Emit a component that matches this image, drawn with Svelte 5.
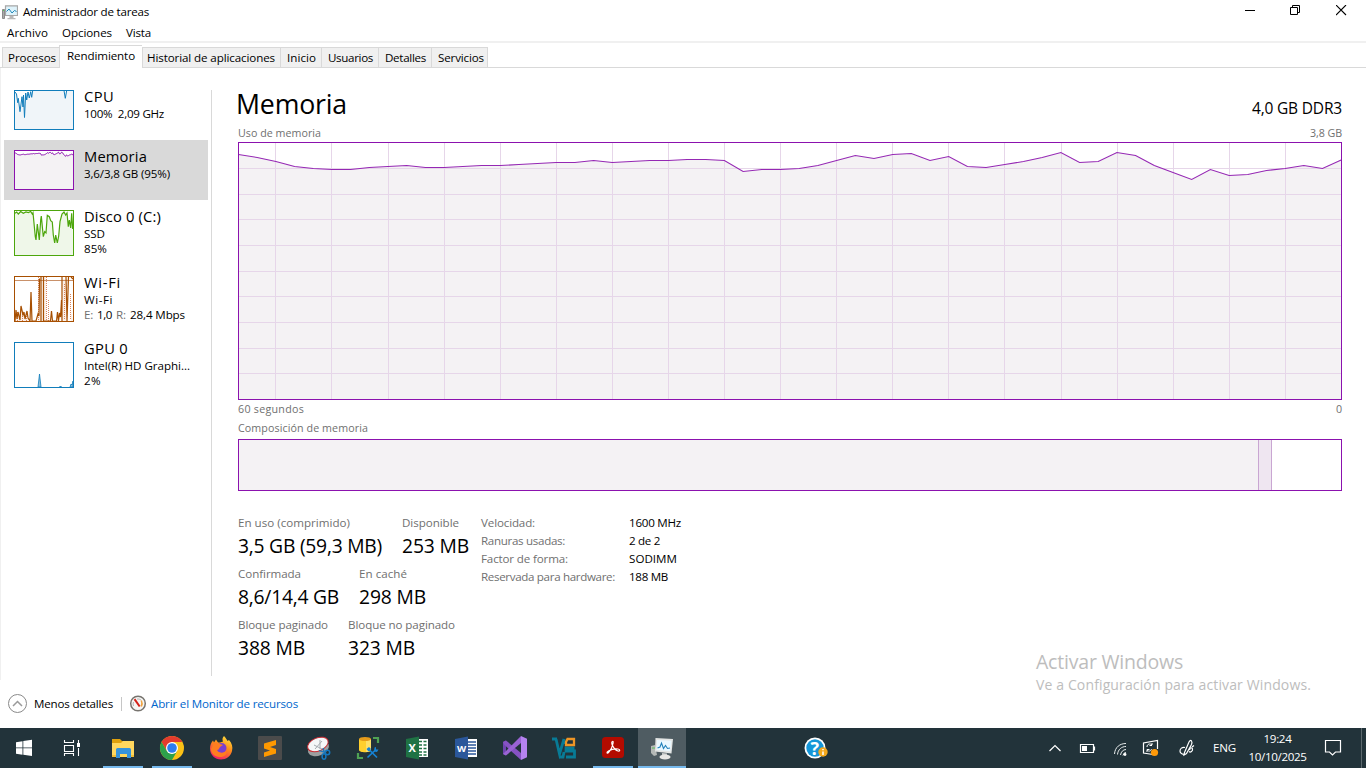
<script>
  // Spreads a label's letters so that it takes the given width.
  function fit(node, width) {
    const natural = node.getBoundingClientRect().width;
    const count = node.textContent.length;
    node.style.letterSpacing = `${(width - natural) / count}px`;
  }

  const tabs = [
    { name: 'Procesos', w: 57, t: 48 },
    { name: 'Rendimiento', w: 83, t: 68, active: true },
    { name: 'Historial de aplicaciones', w: 138, t: 128 },
    { name: 'Inicio', w: 41, t: 29 },
    { name: 'Usuarios', w: 57, t: 45 },
    { name: 'Detalles', w: 53, t: 41 },
    { name: 'Servicios', w: 57, t: 46 }
  ];

  const usage = [
    154.5, 157.5, 161.5, 166.5, 168.5, 169.5, 169.5, 167.5, 166.5, 165.5, 167.5, 167.5, 166.5, 165.5, 165.5,
    164.5, 163.5, 162.5, 162.5, 160.5, 162.5, 161.5, 160.5, 160.5, 159.5, 159.5, 160.5, 171.5, 169.5, 169.5,
    168.5, 165.5, 160.5, 155.5, 158.5, 154.5, 153.5, 160.5, 156.5, 166.5, 167.5, 164.5, 161.5, 157.5, 152.5,
    162.5, 161.5, 152.5, 155.5, 165.5, 172.5, 179.5, 169.5, 175.5, 174.5, 170.5, 168.5, 165.5, 168.5, 160
  ];
  const line = usage.map((y, i) => `${(0.5 + i * 18.69).toFixed(1)},${y - 142}`).join(' ');
  const mini = usage.map((y, i) => `${(0.5 + i).toFixed(1)},${((y - 142) * 0.155 + 0.6).toFixed(1)}`).join(' ');
  const columns = [37, 93, 150, 206, 262, 318, 374, 430, 486, 542, 598, 654, 710, 766, 823, 879, 935, 991, 1047];
  const rows = [26, 52, 77, 103, 129, 154, 180, 206, 231];

  const cpu = '1,2 2.5,4 3.7,12.7 4.3,8.3 6,21.7 8,6.7 9,17 9.5,5 10.5,27.5 11.7,3 12.7,10 14,2 15.3,8 16.7,1.7 17.7,7.3 18.7,.5 50,.5 51.3,8.3 52.7,.5 59,.5';
  const disk = '1,3.3 2.7,2 4.3,4 6.7,1.5 9.3,3.3 12,2 14.3,2.5 16.7,1.5 18.3,4 19,2.7 21.3,26.7 22,30 23.3,14 25.3,30 26.7,10 27.3,6 29.3,26.7 30.7,21.7 32,23 33.3,5.3 35.3,6.7 36.7,10.7 38.3,12 39.3,25 40.7,33 41.7,25 43.3,33 44.7,26 46,11.7 48,4 50,2 51.7,5 53,3 54.3,16.7 55.3,10 56.7,18 57.7,3.3 58.7,19';

  const stats = [
    [['En uso (comprimido)', 112, '3,5 GB (59,3 MB)', 144, 164], ['Disponible', 57, '253 MB', 67, 67]],
    [['Confirmada', 63, '8,6/14,4 GB', 101, 121], ['En caché', 48, '298 MB', 67, 67]],
    [['Bloque paginado', 90, '388 MB', 67, 110], ['Bloque no paginado', 107, '323 MB', 67, 107]]
  ];
  const details = [
    ['Velocidad:', 54, '1600 MHz', 52],
    ['Ranuras usadas:', 84, '2 de 2', 31],
    ['Factor de forma:', 87, 'SODIMM', 48],
    ['Reservada para hardware:', 134, '188 MB', 39]
  ];
</script>

<div class="window">
  <header class="titlebar">
    <svg class="appicon" width="16" height="16" viewBox="0 0 16 16">
      <path d="M.5 4.500h2v9h-2z" fill="#aaa" stroke="#8b8b8b" /><path d="M1 5h1v1H1z" fill="#5c5" />
      <path d="M3.500 .8h12v9.700h-12z" fill="#dff3fb" stroke="#a7a7a7" stroke-width="1.200" />
      <path d="M4.500 6.500 7 4l3 4 2.500-2.500 2 1" fill="none" stroke="#2188b8" />
      <path d="M7.500 11h4v2h2v1.200h-8V13h2z" fill="#b8b8b8" />
    </svg>
    <span class="t" use:fit={126}>Administrador de tareas</span>
    <div class="caption">
      <svg width="11" height="11"><path d="M0 5.500h10" stroke="#000" /></svg>
      <svg width="11" height="11"><path d="M.5 2.500h7v7h-7zM2.500 2.500v-2h7v7h-2" fill="none" stroke="#000" /></svg>
      <svg width="11" height="11"><path d="M0 0l10 10M10 0 0 10" stroke="#000" stroke-width="1.100" /></svg>
    </div>
  </header>
  <nav class="menu">
    <span class="t" use:fit={41}>Archivo</span>
    <span class="t" use:fit={50}>Opciones</span>
    <span class="t" use:fit={25}>Vista</span>
  </nav>
  <div class="tabs">
    {#each tabs as tab}
      <div class="tab" class:active={tab.active} style:width="{tab.w}px"><span class="t" use:fit={tab.t}>{tab.name}</span></div>
    {/each}
  </div>

  <div class="body">
    <aside class="side">
      <div class="item">
        <svg width="60" height="40">
          <rect width="60" height="40" fill="#fff" /><polygon points="{cpu} 59,39 1,39" fill="#f0f5f9" />
          <polyline points={cpu} fill="none" stroke="#117dbb" /><rect x=".5" y=".5" width="59" height="39" fill="none" stroke="#117dbb" />
        </svg>
        <div><p class="name"><span class="t" use:fit={30}>CPU</span></p><p><span class="t" use:fit={80}>100%&nbsp; 2,09 GHz</span></p></div>
      </div>
      <div class="item selected">
        <svg width="60" height="40">
          <rect width="60" height="40" fill="#fff" /><polygon points="{mini} 59,39 1,39" fill="#f4f2f4" />
          <polyline points={mini} fill="none" stroke="#8b12ae" /><rect x=".5" y=".5" width="59" height="39" fill="none" stroke="#8b12ae" />
        </svg>
        <div><p class="name"><span class="t" use:fit={63}>Memoria</span></p><p><span class="t" use:fit={86}>3,6/3,8 GB (95%)</span></p></div>
      </div>
      <div class="item">
        <svg width="60" height="46">
          <rect width="60" height="46" fill="#fff" /><polygon points="{disk} 59,45 1,45" fill="#eff7e9" />
          <polyline points={disk} fill="none" stroke="#4da60c" stroke-width="1.200" /><rect x=".5" y=".5" width="59" height="45" fill="none" stroke="#4da60c" />
        </svg>
        <div><p class="name"><span class="t" use:fit={77}>Disco 0 (C:)</span></p><p><span class="t" use:fit={21}>SSD</span></p><p><span class="t" use:fit={23}>85%</span></p></div>
      </div>
      <div class="item">
        <svg width="60" height="46">
          <rect width="60" height="46" fill="#fff" />
          <path d="M1 45V32l3 5 3-3 4 4 3 7h2l1-23 1 23h6l2-9V1h6v40l2 4h14l1-42h5v42h3V34l2 11z" fill="#fbf1ea" />
          <path d="M1 4.500h58" stroke="#c9916a" />
          <path d="M24.500 1v44M32.500 1v44M34.500 24v21M50.500 8v36M56.500 18v26M3.500 36v9M8.500 36v9M12.500 38v7" stroke="#dc855b" stroke-dasharray="1 1" />
          <path d="M1 45l1-11 1 9 1-7 2 8 1-14 2 9 1-3 1 7 2-8 1 7 2 3 1-29 1 29h4l2-7 1 2 .5-37.500M27 1v44M29.500 1v44h7l1-10 1 10h4l1-9 1 9 1-8 1 4 1-17 .5 21V1M54.500 1 53 45M52 1l1 44M57 1l2 2" fill="none" stroke="#a74f01" stroke-width="1.200" />
          <rect x=".5" y=".5" width="59" height="45" fill="none" stroke="#a74f01" />
        </svg>
        <div>
          <p class="name"><span class="t" use:fit={37}>Wi-Fi</span></p><p><span class="t" use:fit={29}>Wi-Fi</span></p>
          <p class="rates"><span class="t dim" use:fit={9}>E:</span><span class="t" use:fit={15}>1,0</span><span class="t dim" use:fit={10}>R:</span><span class="t" use:fit={55}>28,4 Mbps</span></p>
        </div>
      </div>
      <div class="item">
        <svg width="60" height="46">
          <rect x=".5" y=".5" width="59" height="45" fill="#fff" stroke="#117dbb" />
          <path d="M24 45l1.500-13L27 45zM56 45l1-3 1 1 1-4v6zM45.500 45l1-1 1 1z" fill="#8fbfdc" stroke="#117dbb" stroke-width=".8" />
        </svg>
        <div><p class="name"><span class="t" use:fit={44}>GPU 0</span></p><p><span class="t" use:fit={106}>Intel(R) HD Graphi...</span></p><p><span class="t" use:fit={17}>2%</span></p></div>
      </div>
    </aside>
    <div class="divider"></div>
    <main>
      <div class="heading"><h1><span class="t" use:fit={111}>Memoria</span></h1><span class="t ddr" use:fit={90}>4,0 GB DDR3</span></div>
      <div class="caps top"><span class="t" use:fit={83}>Uso de memoria</span><span class="t" use:fit={32}>3,8 GB</span></div>
      <svg class="chart" width="1104" height="258">
        <polygon points="{line} 1103,257 1,257" fill="#f4f2f4" />
        {#each columns as x}<path d="M{x + 0.5} 1v256" stroke="#e6d6e9" />{/each}
        {#each rows as y}<path d="M1 {y + 0.5}h1102" stroke="#e6d6e9" />{/each}
        <polyline points={line} fill="none" stroke="#9528b4" stroke-width="1.100" />
        <rect x=".5" y=".5" width="1103" height="257" fill="none" stroke="#8b12ae" />
      </svg>
      <div class="caps"><span class="t" use:fit={66}>60 segundos</span><span class="t" use:fit={6}>0</span></div>
      <div class="caps second"><span class="t" use:fit={130}>Composición de memoria</span></div>
      <div class="composition"><div class="used"></div><div class="modified"></div></div>
      <div class="numbers">
        <div class="stats">
          {#each stats as row}
            <div class="statrow">
              {#each row as [label, lw, value, vw, w]}
                <div style:width="{w}px"><div class="label"><span class="t" use:fit={lw}>{label}</span></div><div class="value"><span class="t" use:fit={vw}>{value}</span></div></div>
              {/each}
            </div>
          {/each}
        </div>
        <dl>
          {#each details as [label, lw, value, vw]}
            <dt><span class="t" use:fit={lw}>{label}</span></dt><dd><span class="t" use:fit={vw}>{value}</span></dd>
          {/each}
        </dl>
      </div>
    </main>
  </div>

  <footer>
    <svg width="20" height="20"><circle cx="10.500" cy="9.500" r="9" fill="none" stroke="#8a8a8a" /><path d="M6 12 10.500 7.500 15 12" fill="none" stroke="#9a9a9a" stroke-width="1.500" /></svg>
    <span class="t less" use:fit={79}>Menos detalles</span>
    <span class="sep"></span>
    <svg width="18" height="18"><circle cx="9" cy="8.500" r="7.300" fill="#f6f6f4" stroke="#77746f" stroke-width="1.500" /><path d="M4.500 11a5 5 0 0 1 0-4M8 4a5 5 0 0 1 4 1" fill="none" stroke="#b5b5b5" /><path d="M12.300 5.500q1.500 3 0 6" fill="none" stroke="#f0a23c" stroke-width="1.500" /><path d="M5.500 4.200 10.700 11.500" stroke="#d32119" stroke-width="2" /></svg>
    <span class="t link" use:fit={147}>Abrir el Monitor de recursos</span>
  </footer>

  <div class="taskbar">
    <div class="slot sys"><svg width="48" height="40"><path d="M16 14.200l6.500-1v6.300H16zM23.300 13l8.700-1.200v7.700h-8.700zM16 20.300h6.500v6.400l-6.500-1zM23.300 20.300H32V28l-8.700-1.200z" fill="#fff" /></svg></div>
    <div class="slot sys task"><svg width="48" height="40"><path d="M16.500 12v2.500h9V12M16.500 17.500h9v6h-9zM16.500 28v-2.500h9V28M30.500 12v3M30.500 20v8" fill="none" stroke="#fff" stroke-width="1.100" /><path d="M29 15h3v4h-3z" fill="#fff" /></svg></div>
    <div class="slot running">
      <svg width="49" height="40"><path d="M14 11h8l2 2h11v15H14z" fill="#dfa10d" /><path d="M14 15h9l2-2h11v16H14z" fill="#ffd75e" /><path d="M18 21.500q0-1.500 1.500-1.500h12q1.500 0 1.500 1.500V30h-4v-4h-7v4h-4z" fill="#3593dc" /><path d="M14 29h4v-2h-4zM33 29h3v-2h-3z" fill="#f3bd34" /></svg>
    </div>
    <div class="slot running">
      <svg width="49" height="40"><circle cx="25" cy="20" r="12" fill="#fbc116" /><path d="M14.600 14A12 12 0 0 1 35.400 14H25L19.800 23z" fill="#e33b2e" /><path d="M14.600 14A12 12 0 0 0 25 32l5.200-9-5.200 3-5.200-3z" fill="#2da14b" /><circle cx="25" cy="20" r="6" fill="#fff" /><circle cx="25" cy="20" r="4.800" fill="#2d7df0" /></svg>
    </div>
    <div class="slot">
      <svg width="49" height="40">
        <defs><linearGradient id="fox" x1=".8" y1="0" x2=".3" y2="1"><stop offset="0" stop-color="#ffe33d" /><stop offset=".45" stop-color="#ff8b1a" /><stop offset="1" stop-color="#f0186f" /></linearGradient></defs>
        <path d="M28 8c2 2 3 4 3.500 5l1.500-1c3 3 4 7 3 11-1 5-6 8.500-11 8.500-6 0-11-4.500-11-11 0-3 1-6 3-8l1 2 2-3 2 3h2l3-1c-1-2-.5-4 1-5.500z" fill="url(#fox)" />
        <circle cx="25.500" cy="20" r="5" fill="#7b3fd0" /><path d="M18 15c3-1 5 0 6 1l3 1-3 2c-1 1-1 3-3 3 1 3 6 4 9 1 2 4-3 6-6 6-6 0-9-4-9-8z" fill="#ff7d20" />
      </svg>
    </div>
    <div class="slot"><svg width="49" height="40"><rect x="13" y="8" width="24" height="24" rx="1" fill="#4b4b4b" /><path d="M19 15.500 31 12v5l-6 2 6 2v4.500L19 29v-4.500l6-2-6-2z" fill="#ff9800" /></svg></div>
    <div class="slot">
      <svg width="49" height="40"><g transform="rotate(-22 24 18)"><ellipse cx="23.500" cy="20.500" rx="11" ry="7" fill="#9b9fa0" /><ellipse cx="24.500" cy="16.500" rx="10.800" ry="6.500" fill="#f5f7f8" stroke="#c92b32" /></g><path d="M21 21l7-8M20 17l8 4M26 12v9" fill="none" stroke="#a5abb0" /><path d="M25 22.500l6 2M29 20l1.500 5" stroke="#1577be" stroke-width="1.300" /><circle cx="33.500" cy="24.500" r="2.200" fill="none" stroke="#1577be" stroke-width="1.500" /><ellipse cx="30" cy="28.500" rx="1.900" ry="2.700" fill="none" stroke="#1577be" stroke-width="1.500" /></svg>
    </div>
    <div class="slot">
      <svg width="49" height="40"><path d="M16 11v11c0 3 12 3 12 0V11z" fill="#ffcf2d" /><path d="M23 11h5v11q-1 2-5 2z" fill="#fddf68" /><ellipse cx="22" cy="11" rx="6" ry="2" fill="#e59b1b" /><path d="M30 10h5v5M15 25v5h5" fill="none" stroke="#4fa254" stroke-width="2.200" /><path d="M26 21.500l8 8M33 21.500l-8.500 8" stroke="#1682d4" stroke-width="1.700" /><path d="M23.500 21l2.500-2 2 2-2.500 2.500zM31.500 19.500l1.500-.5v2.500h2.500L34 24l-3-.5z" fill="#1682d4" /></svg>
    </div>
    <div class="slot"><svg width="49" height="40"><path d="M25 11h11v18H25z" fill="#fff" /><path d="M27 13.500h3m1.500 0h3M27 17h3m1.500 0h3M27 20.500h3m1.500 0h3M27 24h3m1.500 0h3M27 27h3m1.500 0h3" stroke="#217346" stroke-width="1.700" /><path d="M14 11l13-2.500v23L14 29z" fill="#1f7244" /><text x="16.500" y="24" class="logo">X</text></svg></div>
    <div class="slot"><svg width="49" height="40"><path d="M25 11h11v18H25z" fill="#fff" /><path d="M27 14h8M27 17h8M27 20h8M27 23h8M27 26h8" stroke="#2b579a" stroke-width="1.300" /><path d="M14 11l13-2.500v23L14 29z" fill="#2b579a" /><text x="16" y="24" class="logo w">W</text></svg></div>
    <div class="slot"><svg width="49" height="40"><path d="M13 14l3-1.500v15L13 26z" fill="#6f45b0" /><path d="M13 14l3-1.500L31 25v7L14.500 17z" fill="#8652c2" /><path d="M13 26l3 1.500L31 15V8z" fill="#9a63d4" /><path d="M31 8l6 2.800v18.400L31 32z" fill="#b583f0" /></svg></div>
    <div class="slot"><svg width="49" height="40"><path d="M13 11h5M17 11l3.500 15L25 11M20 29h4l1-5M25 11v5M35.500 20H27v3h8.500v6H27" fill="none" stroke="#087b96" stroke-width="2.800" /><path d="M28.500 11H35v6h-8v-3z" fill="none" stroke="#ee9526" stroke-width="2.300" /></svg></div>
    <div class="slot running"><svg width="49" height="40"><rect x="14" y="9" width="22" height="21" rx="3.500" fill="#b30b00" /><path d="M24.500 13.500c-1 0-1 2 0 4s3.500 5 5.500 5.500 2.500-1.500 0-2-7 .5-9.500 2-1.500 3 0 1.500 4-6 4.500-9-.3-2-.5-2z" fill="none" stroke="#fff" stroke-width="1.200" /></svg></div>
    <div class="slot running current">
      <svg width="49" height="40"><path d="M14 18l4-1 2 10-3 1-3-3z" fill="#b5b9b7" /><path d="M15 20h3" stroke="#58bd58" /><path d="M18.500 10l17.500 1-1.500 14.500L18 23.500z" fill="#e3e5e4" /><path d="M20 12l14.500 .8-1.200 10.500L19.500 22z" fill="#e9f8ff" /><path d="M20.500 20l2.500-1 1.500-4 2 5.500 2-3 2 3 2.500-.5" fill="none" stroke="#2282bb" stroke-width="1.100" /><path d="M25 25l5 .5v2.500h-5z" fill="#c9cbca" /><ellipse cx="28" cy="29" rx="5.500" ry="2.500" fill="#e7e7e5" /></svg>
    </div>
    <div class="slot help">
      <svg width="49" height="40"><circle cx="25" cy="20" r="10.500" fill="#fff" /><circle cx="25" cy="20" r="8.700" fill="#1596d8" /><text x="20.500" y="26.500" class="ask">?</text><circle cx="33" cy="24" r="4.700" fill="#f5a91d" /><path d="M33 23.500v3.500M33 21v1.300" stroke="#fff" stroke-width="1.500" /></svg>
    </div>
    <div class="tray">
      <svg width="14" height="40"><path d="M1.500 23 7 17.500l5.500 5.500" fill="none" stroke="#fff" stroke-width="1.200" /></svg>
      <svg class="bat" width="17" height="40"><path d="M1.500 16.500h13v8h-13zM15.500 18.500v4" fill="none" stroke="#fff" stroke-width="1.200" /><path d="M3 18h5v5H3z" fill="#fff" /></svg>
      <svg class="wifi" width="14" height="40"><path d="M1.500 26C2 19 7 15.500 13 15.500M4.500 26.500C5 21.500 8.500 18.500 13 18.500M7.500 27c.5-3 2.500-5.500 5.500-5.500M10 27.500q.5-3 3-3" fill="none" stroke="#e9eded" /><circle cx="12" cy="26.500" r="1.400" fill="#fff" /></svg>
      <svg class="upd" width="18" height="40"><path d="M11 26.500 1.500 25V15l14-2.500V21" fill="none" stroke="#fff" stroke-width="1.200" /><path d="M5 19c0-3 3-4 5-2v-2M10 17.500H7.500M5 24v-2.500h2.500M5 22c2 2 4 1 4.500-1" fill="none" stroke="#fff" /><circle cx="12.500" cy="24.500" r="3.600" fill="#ff9a0a" /></svg>
      <svg class="pen" width="19" height="40"><path d="M6.500 24.500 11 14q1.500-2.500 2.500-1t0 3.500L8.500 25.500 6 27zM7 19.500c-3-.5-5 1-5 3.500 0 2 1.500 3 4 3.500M12 22c-1-2 2-3 2.500-1s-2 4-3.500 2.500M14 19l2-1.500" fill="none" stroke="#fff" stroke-width="1.200" /></svg>
      <span class="t eng" use:fit={23}>ENG</span>
      <div class="clock"><span class="t" use:fit={28}>19:24</span><span class="t" use:fit={58}>10/10/2025</span></div>
      <svg class="note" width="18" height="40"><path d="M1.500 12.500h15v11.500h-5l-3 3-3-3h-4z" fill="none" stroke="#fff" stroke-width="1.200" /></svg>
      <span class="peek"></span>
    </div>
  </div>

  <div class="watermark"><span class="t big" use:fit={147}>Activar Windows</span><span class="t" use:fit={275}>Ve a Configuración para activar Windows.</span></div>
</div>

<style>
  :global(body) { margin: 0; background: #fff; overflow: hidden; }
  .window { width: 1366px; height: 768px; display: flex; flex-direction: column; position: relative; font: 11.6px "Open Sans", "Noto Sans", sans-serif; color: #000; background: #fff; }
  .t { display: inline-block; white-space: pre; }
  svg { display: block; flex: none; }
  p, h1, dl, dd { margin: 0; }
  .dim { color: #707070; }
  .titlebar { height: 24px; display: flex; line-height: 23px; }
  .appicon { margin: 5px 4px 0 2px; }
  .titlebar > .t { margin-left: 1px; }
  .caption { margin: 5px 19px 0 auto; display: flex; gap: 35px; }
  .caption svg:first-child { margin-right: -1px; }
  .menu { height: 17px; display: flex; gap: 14px; padding-left: 7px; line-height: 17px; border-bottom: 2px solid #f0f0f0; }
  .tabs { height: 22px; margin-top: 2px; padding-left: 2px; display: flex; align-items: flex-end; border-bottom: 1px solid #d9d9d9; }
  .tab { height: 20px; line-height: 20px; box-sizing: border-box; padding-left: 6px; background: #f0f0f0; border: solid #d9d9d9; border-width: 1px 0 0 1px; }
  .tab:first-child { padding-left: 5px; }
  .tab:nth-child(3) { padding-left: 4px; }
  .tab:last-child { border-right-width: 1px; }
  .tab.active { height: 23px; margin-bottom: -1px; padding-left: 7px; background: #fff; }
  .body { height: 612px; display: flex; }
  .side { width: 207px; padding: 12px 0 0 3px; border-left: 1px solid #f0f0f0; }
  .item { display: flex; gap: 10px; width: 194px; padding: 10px 0 10px 10px; }
  .item.selected { background: #d9d9d9; }
  .item > div { height: 44px; margin-top: -4px; }
  .item:nth-child(n+3) > div { height: 50px; }
  .item p { line-height: 15px; height: 15px; }
  .item .name { font-size: 14.700px; line-height: 20px; height: 20px; }
  .rates { display: flex; gap: 4px; }
  .divider { width: 1px; margin: 22px 0 4px; background: #d9d9d9; }
  main { width: 1104px; padding: 17px 0 0 26px; }
  .heading { height: 36px; display: flex; justify-content: space-between; align-items: baseline; line-height: 38px; }
  h1 { font-size: 26.700px; font-weight: 400; margin-left: -2px; }
  .ddr { font-size: 15.500px; }
  .caps { display: flex; justify-content: space-between; height: 16px; margin-top: 1px; line-height: 16px; font-size: 10.700px; color: #707070; }
  .caps.top { margin: 4px 0 1px; }
  .caps.second { margin: 3px 0; }
  .composition { display: flex; height: 50px; border: 1px solid #8b12ae; }
  .used { width: 1019px; background: #f4f2f4; }
  .modified { width: 12px; background: #efe6f1; border: solid #c9a6d2; border-width: 0 1px; }
  .numbers { display: flex; padding-top: 24px; }
  .stats { width: 243px; }
  .statrow { display: flex; height: 51px; }
  .label { line-height: 15px; height: 18px; color: #707070; }
  .value { font-size: 19.300px; line-height: 26px; height: 26px; }
  dl { display: grid; grid-template-columns: 148px 60px; grid-auto-rows: 18px; line-height: 15px; }
  dt { color: #707070; }
  footer { height: 48px; display: flex; align-items: center; padding-left: 7px; box-sizing: border-box; padding-bottom: 1px; }
  .less { margin-left: 7px; }
  .sep { width: 1px; height: 14px; margin: 0 7px 0 8px; background: #c6c6c6; }
  .link { margin-left: 4px; color: #0066cc; }
  .taskbar { height: 40px; display: flex; background: #22333a; color: #fff; }
  .slot { width: 49px; height: 40px; position: relative; }
  .slot.sys { width: 48px; }
  .slot.task { margin-right: 2px; }
  .running::after { content: ""; position: absolute; left: 5px; width: 40px; bottom: 0; height: 2px; background: #76b9ed; }
  .current { background: linear-gradient(90deg, transparent 1px, #4f5c62 1px); }
  .current::after { left: 1px; width: 48px; }
  .help { margin-left: 104px; }
  .logo { font: bold 11px "Open Sans", sans-serif; fill: #fff; }
  .logo.w { font-size: 9.500px; }
  .ask { font: bold 18px "Open Sans", sans-serif; fill: #fff; }
  .tray { display: flex; margin-left: auto; line-height: 40px; }
  .bat { margin-left: 17px; }
  .wifi { margin-left: 17px; }
  .upd { margin-left: 15px; }
  .pen { margin-left: 18px; }
  .eng { margin-left: 16px; }
  .clock { width: 59px; margin-left: 12px; display: flex; flex-direction: column; align-items: center; line-height: 18px; padding-top: 2px; }
  .note { margin-left: 17px; }
  .peek { width: 1px; height: 40px; margin: 0 4px 0 19px; background: #5c696e; }
  .watermark { position: absolute; left: 1036px; top: 650px; display: flex; flex-direction: column; align-items: flex-start; font-size: 14px; line-height: 22px; color: #bdbdbd; }
  .big { font-size: 19.500px; line-height: 24px; }
</style>
